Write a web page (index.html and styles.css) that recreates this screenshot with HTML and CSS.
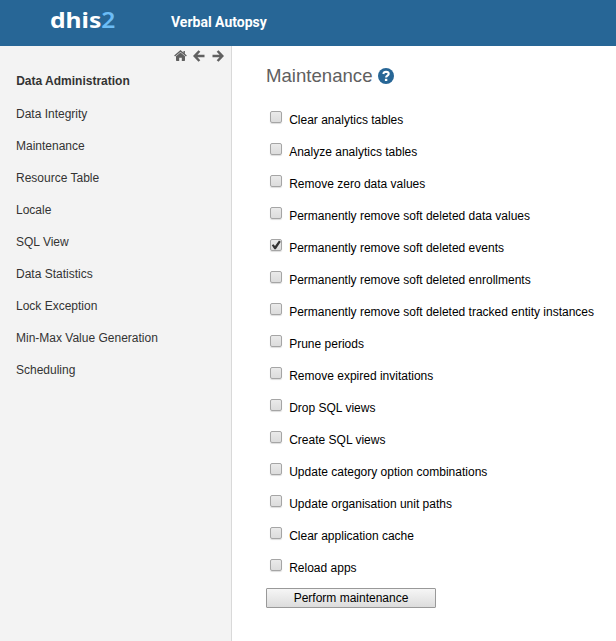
FILE: index.html
```html
<!DOCTYPE html>
<html lang="en">
<head>
<meta charset="utf-8">
<title>Maintenance</title>
<link rel="stylesheet" href="styles.css">
</head>
<body>
<header class="header">
  <div class="logo">dhis<span class="logo-two">2</span></div>
  <div class="app-title">Verbal Autopsy</div>
</header>
<div class="layout">
  <aside class="sidebar">
    <div class="tools">
      <svg class="tool home" viewBox="0 0 13 11"><path d="M6.5 2.6 11 6.3V10.2Q11 11 10.3 11H7.8V7.7H5.2V11H2.7Q2 11 2 10.2V6.3Z"/><path d="M.6 6 6.5 1 12.4 6M10.2 1V4" class="roof"/></svg>
      <svg class="tool" viewBox="0 0 12 12"><path d="M6.4 1 1.7 6l4.7 5M2 6h9.5" class="arrow"/></svg>
      <svg class="tool" viewBox="0 0 12 12"><path d="m5.6 1 4.7 5-4.7 5M10 6H.5" class="arrow"/></svg>
    </div>
    <h2 class="menu-title">Data Administration</h2>
    <ul class="menu">
      <li>Data Integrity</li>
      <li>Maintenance</li>
      <li>Resource Table</li>
      <li>Locale</li>
      <li>SQL View</li>
      <li>Data Statistics</li>
      <li>Lock Exception</li>
      <li>Min-Max Value Generation</li>
      <li>Scheduling</li>
    </ul>
  </aside>
  <main class="main">
    <h1 class="page-title">Maintenance
      <svg class="help" viewBox="0 0 16 16"><circle cx="8" cy="8" r="8"/><path d="M5.3 6Q5.7 3.8 8 3.8 10.7 3.9 10.7 5.9C10.7 7.6 8.1 7.7 8.1 9.5"/><rect x="6.9" y="10.8" width="2.4" height="2.2"/></svg>
    </h1>
    <form class="options">
      <label class="option"><input type="checkbox" class="check"><span>Clear analytics tables</span></label>
      <label class="option"><input type="checkbox" class="check"><span>Analyze analytics tables</span></label>
      <label class="option"><input type="checkbox" class="check"><span>Remove zero data values</span></label>
      <label class="option"><input type="checkbox" class="check"><span>Permanently remove soft deleted data values</span></label>
      <label class="option"><input type="checkbox" class="check" checked><span>Permanently remove soft deleted events</span></label>
      <label class="option"><input type="checkbox" class="check"><span>Permanently remove soft deleted enrollments</span></label>
      <label class="option"><input type="checkbox" class="check"><span>Permanently remove soft deleted tracked entity instances</span></label>
      <label class="option"><input type="checkbox" class="check"><span>Prune periods</span></label>
      <label class="option"><input type="checkbox" class="check"><span>Remove expired invitations</span></label>
      <label class="option"><input type="checkbox" class="check"><span>Drop SQL views</span></label>
      <label class="option"><input type="checkbox" class="check"><span>Create SQL views</span></label>
      <label class="option"><input type="checkbox" class="check"><span>Update category option combinations</span></label>
      <label class="option"><input type="checkbox" class="check"><span>Update organisation unit paths</span></label>
      <label class="option"><input type="checkbox" class="check"><span>Clear application cache</span></label>
      <label class="option"><input type="checkbox" class="check"><span>Reload apps</span></label>
      <button type="button" class="submit">Perform maintenance</button>
    </form>
  </main>
</div>
</body>
</html>
```
FILE: styles.css
```css
* { box-sizing: border-box; }
body {
  margin: 0;
  height: 641px;
  overflow: hidden;
  display: flex;
  flex-direction: column;
  background: #fff;
  font: 12px/16px "Liberation Sans", Arial, sans-serif;
  color: #000;
}
.header {
  height: 46px;
  flex: none;
  display: flex;
  background: #276696;
  color: #fff;
}
.logo {
  width: 121px;
  margin-left: 50px;
  padding-top: 4px;
  font: 700 22px/30px "Noto Sans", sans-serif;
  transform: scaleX(1.12);
  transform-origin: left;
}
.logo-two { color: #6cbcf5; font-weight: 600; }
.app-title {
  padding-top: 12px;
  font: 700 14px/20px Roboto, sans-serif;
}
.layout { flex: 1; display: flex; }
.sidebar {
  width: 232px;
  flex: none;
  background: #f3f3f3;
  border-right: 1px solid #d9d9d9;
  color: #333;
}
.tools {
  height: 21px;
  padding: 4px 7px 0 0;
  display: flex;
  justify-content: flex-end;
  gap: 7px;
}
.tool { width: 12px; height: 12px; fill: #606060; }
.home { width: 13px; height: 11px; margin-right: -1px; }
.roof { fill: none; stroke: #606060; stroke-width: 1.4; }
.arrow { fill: none; stroke: #606060; stroke-width: 2.5; }
.menu-title {
  margin: 6px 0 17px 16.2px;
  font-size: 12px;
  line-height: 16px;
}
.menu {
  margin: 0 0 0 16px;
  padding: 0;
  list-style: none;
  display: grid;
  gap: 16px;
}
.main { padding: 19px 0 0 34px; }
.page-title {
  margin: 0;
  height: 22px;
  display: flex;
  align-items: center;
  gap: 6px;
  font-size: 18.6px;
  font-weight: 400;
  color: #606060;
}
.help { width: 16px; height: 16px; margin-top: -1px; fill: #276696; }
.help path { fill: none; stroke: #fff; stroke-width: 2.1; }
.help rect { fill: #fff; }
.options { padding-top: 24px; }
.option {
  height: 32px;
  display: flex;
  white-space: nowrap;
}
.option span { padding-top: 1px; }
.check {
  appearance: none;
  width: 12px;
  height: 12px;
  margin: 0 7.2px 0 4px;
  border: 1px solid #a5a5a5;
  border-radius: 2px;
  background: linear-gradient(#eaeaea, #dcdcdc);
  box-shadow: 0 1px 1px #ddd;
}
.check:checked::before {
  content: "";
  display: block;
  width: 10px;
  height: 10px;
  background: #333;
  clip-path: polygon(8% 52%, 24% 42%, 40% 60%, 80% 6%, 98% 18%, 48% 92%, 34% 92%);
}
.submit {
  display: block;
  width: 170px;
  height: 20px;
  margin-top: -3px;
  padding: 0;
  border: 1px solid #999;
  border-radius: 1px;
  background: linear-gradient(#f6f6f6, #dcdcdc);
  font: 12px/16px "Liberation Sans", Arial, sans-serif;
  color: #000;
}
```
